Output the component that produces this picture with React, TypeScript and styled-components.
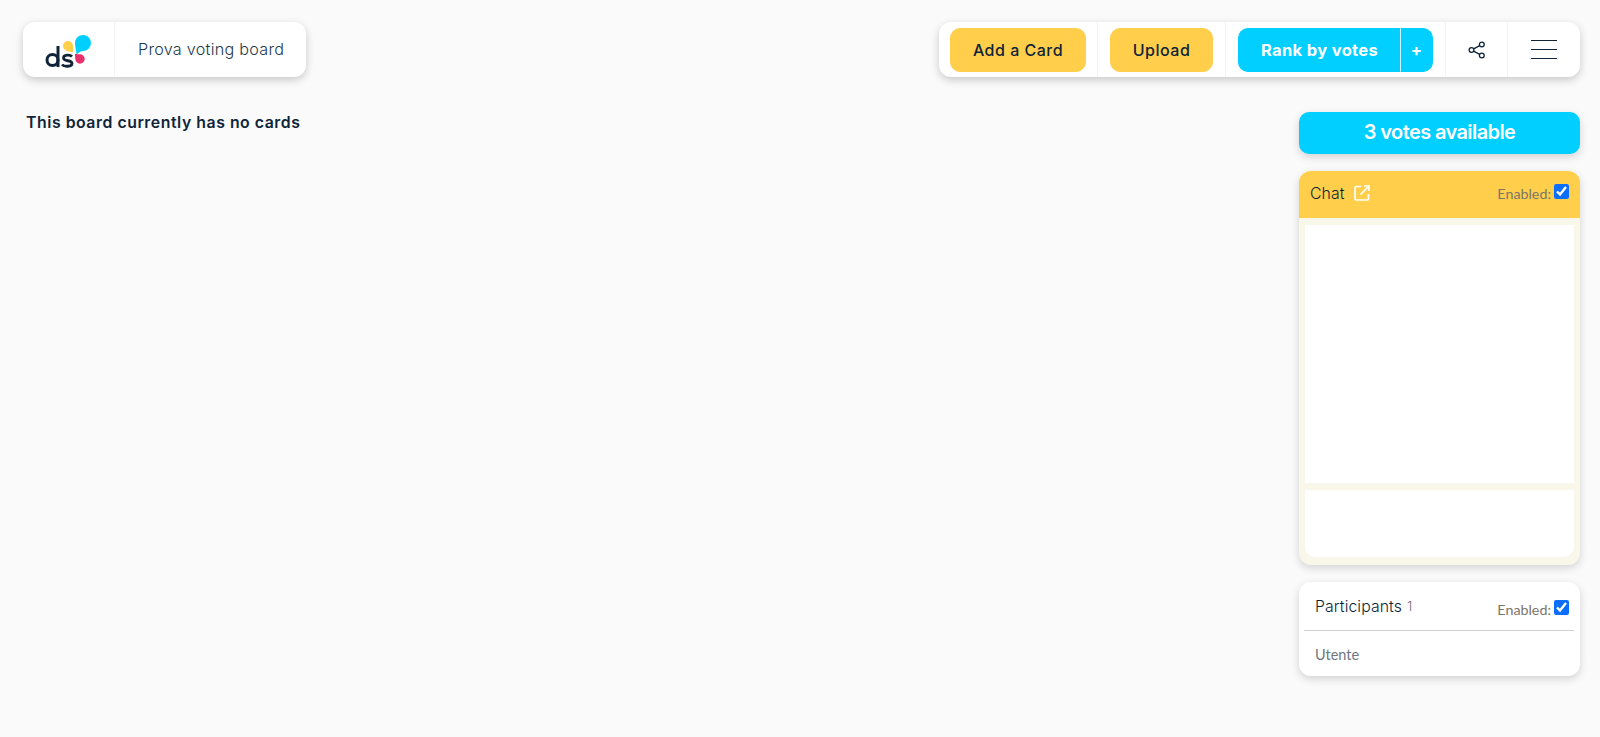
import styled, { createGlobalStyle } from "styled-components";

const GlobalStyle = createGlobalStyle`
  html, body { margin: 0; padding: 0; height: 100%; }
  body { background: #fafafa; color: #0f2438; font-family: "Lato", "Liberation Sans", sans-serif; }
`;

const Page = styled.div`
  height: 737px;
  box-sizing: border-box;
  padding: 22px 20px 0 23px;
  overflow: hidden;
`;

const Header = styled.header`
  display: flex;
  justify-content: space-between;
  align-items: flex-start;
`;

const Bar = styled.div`
  display: flex;
  height: 55px;
  background: #fff;
  border-radius: 12px;
  box-shadow: 0 3px 8px rgba(0, 0, 0, 0.2);
`;

const Cell = styled.div<{ $w: number; $last?: boolean }>`
  display: flex;
  align-items: center;
  justify-content: center;
  box-sizing: border-box;
  height: 100%;
  width: ${(p) => p.$w}px;
  border-right: ${(p) => (p.$last ? "none" : "1px solid #f1f3f6")};
`;

const BoardName = styled.div`
  flex: 1;
  padding-left: 23px;
  width: 168px;
  line-height: 55px;
  font-family: "Inter", sans-serif;
  font-size: 16.2px;
  font-weight: 300;
  letter-spacing: 0.25px;
  color: #1c3a4b;
`;

const Button = styled.button<{ $w: number; $blue?: boolean }>`
  width: ${(p) => p.$w}px;
  height: 44px;
  margin-top: 1px;
  border: 1px solid ${(p) => (p.$blue ? "#00cfff" : "#ffd04d")};
  border-radius: 10px;
  padding: 0;
  background: ${(p) => (p.$blue ? "#00cfff" : "#ffce4b")};
  color: ${(p) => (p.$blue ? "#fff" : "#0f2438")};
  font-family: "Inter", sans-serif;
  font-size: ${(p) => (p.$blue ? "16.5px" : "16px")};
  font-weight: ${(p) => (p.$blue ? 700 : 500)};
  letter-spacing: ${(p) => (p.$blue ? "0.35px" : "0.5px")};
`;

const SplitLeft = styled(Button)`
  border-radius: 10px 0 0 10px;
  border-right: none;
`;

const SplitRight = styled(Button)`
  border-radius: 0 10px 10px 0;
  border-left: 1px solid #cdf3ff;
`;

const Split = styled.div`
  display: flex;
`;

const Menu = styled.div`
  display: flex;
  flex-direction: column;
  gap: 8px;
  width: 26px;
`;

const MenuLine = styled.span`
  display: block;
  height: 1px;
  background: #0f2438;
`;

const Body = styled.main`
  display: flex;
  justify-content: space-between;
  align-items: flex-start;
  margin-top: 35px;
`;

const EmptyNote = styled.p`
  margin: 1px 0 0 3px;
  font-family: "Inter", sans-serif;
  font-size: 15.8px;
  font-weight: 600;
  letter-spacing: 0.55px;
  line-height: 20px;
  color: #0f2438;
`;

const Side = styled.aside`
  display: flex;
  flex-direction: column;
  width: 281px;
  gap: 17px;
`;

const Votes = styled.div`
  height: 42px;
  line-height: 41px;
  border-radius: 10px;
  background: #00cfff;
  color: #fff;
  text-align: center;
  font-family: "Inter", sans-serif;
  font-size: 20px;
  font-weight: 600;
  letter-spacing: -0.6px;
  box-shadow: 0 3px 8px rgba(0, 0, 0, 0.16);
`;

const Panel = styled.section<{ $cream?: boolean }>`
  border-radius: 12px;
  background: ${(p) => (p.$cream ? "#f9f6ea" : "#fff")};
  box-shadow: 0 3px 8px rgba(0, 0, 0, 0.16);
  overflow: hidden;
`;

const ChatHead = styled.div`
  display: flex;
  align-items: center;
  justify-content: space-between;
  height: 47px;
  padding: 0 11px;
  background: #ffce4b;
`;

const Title = styled.span<{ $low?: boolean }>`
  display: flex;
  align-items: center;
  gap: 9px;
  margin-bottom: ${(p) => (p.$low ? "0" : "3px")};
  font-family: "Inter", sans-serif;
  font-size: 15.8px;
  font-weight: 300;
  letter-spacing: 0.1px;
  color: #0a1f33;
`;

const Enabled = styled.label<{ $low?: boolean }>`
  display: flex;
  align-items: center;
  gap: 3px;
  margin: ${(p) => (p.$low ? "7px 0 0" : "0 0 3px")};
  font-size: 14.3px;
  color: #7b766a;
`;

const Check = styled.input.attrs({ type: "checkbox", defaultChecked: true })`
  width: 15px;
  height: 15px;
  margin: 0 0 4px;
  accent-color: #0d6efd;
`;

const ChatBody = styled.div`
  display: flex;
  flex-direction: column;
  gap: 7px;
  padding: 7px 6px 8px 6px;
`;

const ChatLog = styled.div`
  height: 258px;
  background: #fff;
`;

const ChatInput = styled.div`
  height: 67px;
  background: #fff;
  border-radius: 0 0 10px 10px;
`;

const PartHead = styled.div`
  display: flex;
  align-items: center;
  justify-content: space-between;
  height: 48px;
  margin: 0 6px 0 5px;
  padding: 0 5px 0 11px;
  border-bottom: 1px solid #cfd0d4;
`;

const Count = styled.span`
  margin-left: -4px;
  font-size: 13.5px;
  color: #7a6a7a;
`;

const Person = styled.div`
  height: 45px;
  line-height: 48px;
  padding-left: 16px;
  font-size: 14.5px;
  color: #6f7780;
`;

export default function App() {
  return (
    <Page>
      <GlobalStyle />
      <Header>
        <Bar>
          <Cell $w={92}>
            <svg width="48" height="36" viewBox="45 30 48 36">
              <path d="M76.5 52.5C76 47 75 44 75 41a8 8 0 1 1 8 8C81 49 79 50.5 76.5 52.5z" fill="#00cfff" />
              <path d="M73 50C70 50 63 49 63 44a5 5 0 0 1 10 0C73 46 73 48 73 50z" fill="#ffce4b" />
              <path d="M75 52C77 52 79.5 52.3 80 52.3a4.7 4.7 0 1 1-4.7 4.7C75.3 56 75 54 75 52z" fill="#e8326b" />
              <circle cx="52.5" cy="58" r="5.5" fill="none" stroke="#0f2438" strokeWidth="3" />
              <path d="M58 44v21" stroke="#0f2438" strokeWidth="3" fill="none" />
              <path d="M72 54.5C70 52.5 63.5 52.5 63.5 56 63.5 60 72 57.5 72 61.5 72 65 64 65 62 62.5" stroke="#0f2438" strokeWidth="2.8" fill="none" />
            </svg>
          </Cell>
          <BoardName>Prova voting board</BoardName>
        </Bar>
        <Bar>
          <Cell $w={159}><Button $w={136}>Add a Card</Button></Cell>
          <Cell $w={128}><Button $w={103}>Upload</Button></Cell>
          <Cell $w={220}>
            <Split>
              <SplitLeft $w={162} $blue>Rank by votes</SplitLeft>
              <SplitRight $w={33} $blue>+</SplitRight>
            </Split>
          </Cell>
          <Cell $w={62}>
            <svg width="18" height="18" viewBox="0 0 18 18" fill="none" stroke="#0f2438" strokeWidth="1.3">
              <circle cx="3.5" cy="9" r="2.4" />
              <circle cx="13.8" cy="3.5" r="2.4" />
              <circle cx="13.8" cy="14.5" r="2.4" />
              <path d="M5.6 7.9l6.1-3.3M5.6 10.1l6.1 3.3" />
            </svg>
          </Cell>
          <Cell $w={72} $last>
            <Menu><MenuLine /><MenuLine /><MenuLine /></Menu>
          </Cell>
        </Bar>
      </Header>
      <Body>
        <EmptyNote>This board currently has no cards</EmptyNote>
        <Side>
          <Votes>3 votes available</Votes>
          <Panel $cream>
            <ChatHead>
              <Title>
                Chat
                <svg width="16" height="16" viewBox="0 0 16 16" fill="none" stroke="#fff" strokeWidth="1.7">
                  <path d="M7 1.5H2.5a1.5 1.5 0 0 0-1.5 1.5v10.500a1.500 1.500 0 0 0 1.500 1.500H13a1.500 1.500 0 0 0 1.500-1.500V9" />
                  <path d="M6.5 9.5L15 1M10 1h5v5" />
                </svg>
              </Title>
              <Enabled>Enabled:<Check /></Enabled>
            </ChatHead>
            <ChatBody>
              <ChatLog />
              <ChatInput />
            </ChatBody>
          </Panel>
          <Panel>
            <PartHead>
              <Title $low>Participants <Count>1</Count></Title>
              <Enabled $low>Enabled:<Check /></Enabled>
            </PartHead>
            <Person>Utente</Person>
          </Panel>
        </Side>
      </Body>
    </Page>
  );
}
